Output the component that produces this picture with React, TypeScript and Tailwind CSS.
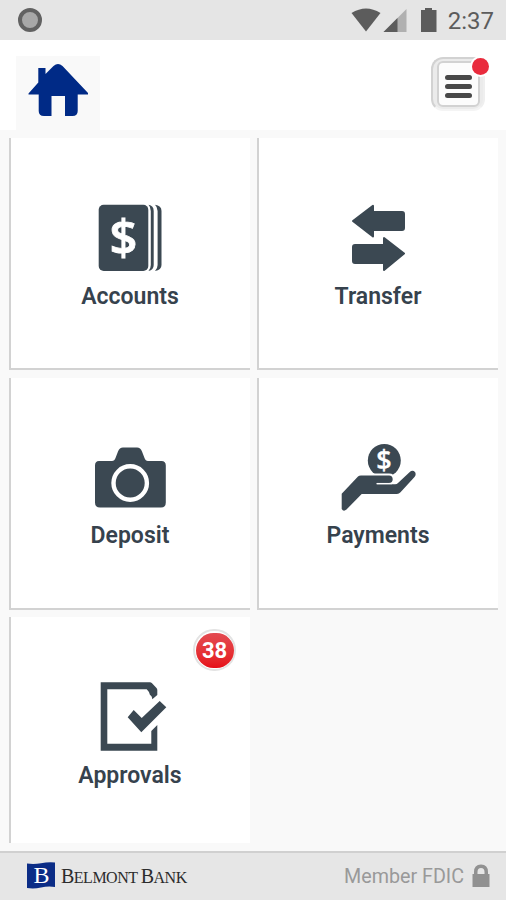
import type { ReactNode } from 'react'

const ink = '#3b4852'

function AccountsIcon() {
  return (
    <svg width="80" height="72" viewBox="0 0 80 72" fill={ink}>
      <rect x="8.7" y="2.7" width="49.6" height="66.3" rx="5" />
      <path d="M58.5 2.7Q63.7 3.5 63.7 9V63Q63.7 68 58.5 69Q60.8 66.5 60.8 63V9Q60.8 5 58.5 2.7Z" />
      <path d="M65 2.7Q71.5 3.5 71.5 9V63Q71.5 68 65 69Q67.6 66.5 67.6 63V9Q67.6 5 65 2.7Z" />
      <text x="33.6" y="53" textAnchor="middle" fill="#fff" stroke="#fff" strokeWidth="0.8" className="font-['Open_Sans',sans-serif] text-[49px] font-semibold">$</text>
    </svg>
  )
}

function TransferIcon() {
  return (
    <svg width="80" height="72" viewBox="0 0 80 72" fill={ink} stroke={ink} strokeWidth="2" strokeLinejoin="round">
      <path d="M15 19L35 3.8V10H64Q66 10 66 12V26Q66 28 64 28H35V34.5Z" />
      <path d="M66 51.5L46 36V43H17Q15 43 15 45V59Q15 61 17 61H46V68Z" />
    </svg>
  )
}

function DepositIcon() {
  return (
    <svg width="80" height="72" viewBox="0 0 80 72" fill={ink}>
      <path d="M9 19H22Q24.5 19 25.5 16L28 9.5Q29.5 5.5 33 5.5H47Q50.5 5.5 52 9.5L54.5 16Q55.5 19 58 19H71.5Q75.8 19 75.8 23.5V60.5Q75.8 65.5 71 65.5H10Q5 65.5 5 60.5V23.5Q5 19 9 19Z" />
      <circle cx="40.2" cy="41" r="16.7" fill="none" stroke="#fff" strokeWidth="4.4" />
    </svg>
  )
}

function PaymentsIcon() {
  return (
    <svg width="80" height="72" viewBox="0 0 80 72" fill={ink}>
      <circle cx="46.3" cy="18.5" r="16.5" />
      <path d="M3.7 51.8L20 34.5Q21 33.5 23 33.5H51Q54.7 33.5 54.7 37.3Q54.7 41 51 41H38.7V42.2H57Q59 42.2 60 41L71.5 30.2Q74.5 27.5 77 30Q78.5 32.5 76.5 35L62.5 50.3Q61 51.9 59 51.9H23.7L8.5 67.5Q5.5 70 3.7 67Z" stroke="#fff" strokeWidth="4" paintOrder="stroke" />
      <path d="M38.7 41.6H54" stroke="#fff" strokeWidth="1.3" />
      <text x="46" y="27.8" textAnchor="middle" fill="#fff" stroke="#fff" strokeWidth="0.3" className="font-['Open_Sans',sans-serif] text-[27px] font-semibold">$</text>
    </svg>
  )
}

function ApprovalsIcon() {
  return (
    <svg width="80" height="72" viewBox="0 0 80 72" fill={ink}>
      <path d="M10.7 1.3H60Q61 1.3 61.8 2.1L66.5 7Q67.3 8 67.3 9V14L62.3 18.3Q61.8 14.5 60 14Q58.8 10 56.7 8.3H17.3V62.7H61.3V50L67.3 44V69.7H10.7Z" />
      <path d="M37.7 36.3L43.7 29L51.7 37L69.7 20L76.3 26.3L51.3 51.3Z" />
    </svg>
  )
}

function Tile({ label, icon, badge, last }: { label: string; icon: ReactNode; badge?: number; last?: boolean }) {
  return (
    <div className={`relative flex flex-col items-center border-l-2 border-[#d2d2d2] bg-white pt-16 pr-px ${last ? 'h-[226px]' : 'h-[232px] border-b-2'}`}>
      {icon}
      <span className="mt-[8.5px] text-[23px] leading-[28px] font-semibold text-[#36424d]">{label}</span>
      {badge && (
        <span className="absolute top-[12px] right-[14px] flex h-[42px] w-[43px] items-center justify-center rounded-full border-2 border-[#e3e3e3] bg-white">
          <span className="flex h-[35px] w-[38px] shrink-0 items-center justify-center rounded-full bg-linear-to-b from-[#e34a51] to-[#e60b17] text-[22px] font-bold text-white">{badge}</span>
        </span>
      )}
    </div>
  )
}

export default function App() {
  return (
    <div className="flex h-[900px] w-[506px] flex-col overflow-hidden bg-[#f9f9f9] font-[Roboto,sans-serif]">
      <div className="flex h-10 items-center justify-between bg-[#e5e5e5] pr-3 pl-[18px]">
        <span className="h-6 w-6 rounded-full border-4 border-[#626262] bg-[#a8a8a8]" />
        <div className="flex items-center text-[#5c5c5c]">
          <svg width="96" height="40" viewBox="0 0 96 40" fill="#5c5c5c">
            <path d="M1.5 13Q16 4 30.5 13L16 31.5Z" />
            <path d="M56.5 9V32H33.5Z" fill="#b0b0b0" />
            <path d="M47.5 18V32H33.5Z" />
            <path d="M75 8H82V10H86.5V32H71V10H75Z" />
          </svg>
          <span className="ml-[2px] pt-[2px] text-[24px] leading-none">2:37</span>
        </div>
      </div>

      <header className="flex h-[90px] items-start justify-between bg-white pr-[21px] pl-4">
        <div className="mt-4 h-[74px] w-[84px] bg-[#f9f9f9]">
          <svg width="84" height="74" viewBox="0 0 84 74" fill="#002a86">
            <path d="M12.5 37.5L22.3 26.5V12H29.5V18L37.5 10Q42 6 46.5 10L72 37V38.5H61.7V55Q61.7 60 56.5 60H49V40H35.500V60H28Q22.700 60 22.700 55V38.500H12.500Z" />
          </svg>
        </div>
        <button className="relative mt-[17px] flex h-[54px] w-[54px] items-center justify-center rounded-xl border-2 border-t-[#d2d2d2] border-l-[#d2d2d2] border-r-[#efefef] border-b-[#f4f4f4] bg-[#ebebeb]">
          <span className="flex h-[46px] w-[43px] flex-col items-center justify-center gap-1 rounded-md border-2 border-[#d2d2d2] bg-[#fcfcfc] pt-1">
            <span className="h-[5px] w-[27px] rounded-full bg-[#484848]" />
            <span className="h-[5px] w-[27px] rounded-full bg-[#484848]" />
            <span className="h-[5px] w-[27px] rounded-full bg-[#484848]" />
          </span>
          <span className="absolute -top-[1px] -right-[6px] h-[17px] w-[17px] rounded-full bg-[#e92b3d] ring-2 ring-white" />
        </button>
      </header>

      <main className="grid h-[721px] grid-cols-[241px_241px] content-start gap-x-[7px] gap-y-[7.5px] pt-2 pl-[9px]">
        <Tile label="Accounts" icon={<AccountsIcon />} />
        <Tile label="Transfer" icon={<TransferIcon />} />
        <Tile label="Deposit" icon={<DepositIcon />} />
        <Tile label="Payments" icon={<PaymentsIcon />} />
        <Tile label="Approvals" icon={<ApprovalsIcon />} badge={38} last />
      </main>

      <footer className="flex h-[49px] items-center justify-between border-t-2 border-[#d0d0d0] bg-[#e6e6e6] pr-4 pl-[27px]">
        <div className="flex items-center gap-[6px]">
          <svg width="28" height="27" viewBox="0 0 28 27" className="-mt-[2px]">
            <path d="M0 1.5Q7 2.5 14 1.2T28 0.5V25Q21 24 14 25.5T0 26Z" fill="#0b2c86" />
            <text x="14.5" y="21" textAnchor="middle" fill="#fff" className="font-['Liberation_Serif',serif] text-[24px]">B</text>
          </svg>
          <span className="-mt-[2px] font-['Liberation_Serif',serif] text-[16px] tracking-[-0.5px] text-[#2c2c2c]">
            <span className="text-[20px]">B</span>ELMONT <span className="text-[20px]">B</span>ANK
          </span>
        </div>
        <div className="flex items-center gap-2 text-[#999]">
          <span className="pt-px text-[19.7px]">Member FDIC</span>
          <svg width="18" height="26" viewBox="0 0 18 26" fill="#919191">
            <path d="M0.5 11H2V9Q2 1.5 9 1.5Q16 1.5 16 9V11H17.5V24H0.5ZM5.5 11H12.5V9Q12.5 5 9 5Q5.5 5 5.5 9Z" fillRule="evenodd" />
          </svg>
        </div>
      </footer>
    </div>
  )
}
